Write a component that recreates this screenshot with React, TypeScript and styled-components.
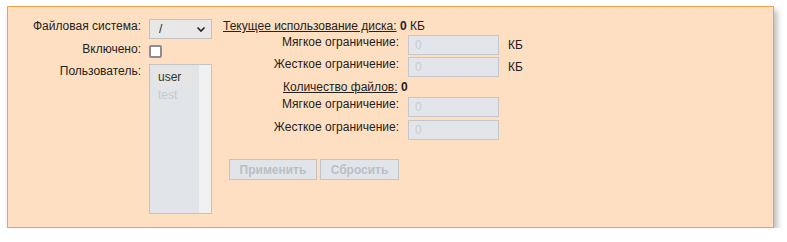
import React from 'react';
import styled, { createGlobalStyle } from 'styled-components';

const GlobalStyle = createGlobalStyle`
  html, body {
    margin: 0;
    padding: 0;
    background: #ffffff;
  }
  body {
    font-family: "Liberation Sans", Arial, sans-serif;
    font-size: 12px;
    color: #222;
  }
`;

const Panel = styled.div`
  box-sizing: border-box;
  margin: 6px 0 0 7px;
  width: 767px;
  height: 222px;
  background: #ffdfc1;
  border: 1px solid #f5a04c;
  box-shadow: 3px 4px 6px rgba(0, 0, 0, 0.28);
  padding: 12px 0 0 0;
  display: flex;
  align-items: flex-start;
  line-height: 14px;
`;

const LeftForm = styled.div`
  display: grid;
  grid-template-columns: 133px 63px;
  column-gap: 8px;
  grid-template-rows: 20px 18px auto;
  row-gap: 3px;
  & > :nth-child(5),
  & > :nth-child(6) {
    margin-top: 1px;
  }
`;

const Label = styled.div`
  text-align: right;
  white-space: nowrap;
  color: #222;
`;

const SelectBox = styled.div`
  box-sizing: border-box;
  height: 20px;
  background: #e8e8e8;
  border: 1px solid #c2c2c2;
  display: flex;
  align-items: center;
  justify-content: space-between;
  padding: 0 5px 0 9px;
  color: #222;
`;

const Checkbox = styled.div`
  box-sizing: border-box;
  width: 13px;
  height: 13px;
  margin-top: 3px;
  border: 2px solid #8c8b99;
  border-radius: 2px;
  background: #ffffff;
`;

const ListBox = styled.div`
  box-sizing: border-box;
  height: 150px;
  background: #e1e5ea;
  border: 1px solid #c4c4c4;
  display: flex;
`;

const Options = styled.div`
  flex: 1;
  padding: 3px 4px;
`;

const Option = styled.div<{ $selected?: boolean }>`
  height: 18px;
  line-height: 18px;
  padding-left: 4px;
  background: ${p => (p.$selected ? '#e5e5e5' : 'transparent')};
  color: ${p => (p.$selected ? '#333' : '#c6c9ce')};
`;

const Track = styled.div`
  width: 12px;
  background: #f0f0f0;
`;

const RightBlock = styled.div`
  margin-left: 11px;
  display: flex;
  flex-direction: column;
`;

const Heading = styled.div<{ $indent?: number; $gap?: number }>`
  padding-left: ${p => p.$indent || 0}px;
  margin-top: ${p => p.$gap || 0}px;
  white-space: nowrap;
  & u {
    text-decoration: underline;
  }
  & b {
    font-weight: bold;
  }
`;

const Row = styled.div<{ $gap: number }>`
  display: grid;
  grid-template-columns: 176px 91px auto;
  column-gap: 9px;
  align-items: start;
  margin-top: ${p => p.$gap}px;
`;

const Input = styled.input`
  box-sizing: border-box;
  width: 91px;
  height: 20px;
  margin: 0;
  background: #e2e5ea;
  border: 1px solid #c4c6c9;
  padding: 0 6px;
  font-family: "Liberation Sans", Arial, sans-serif;
  font-size: 12px;
  color: #c8ccd2;
  &::placeholder {
    color: #c8ccd2;
  }
`;

const Unit = styled.div`
  line-height: 20px;
  color: #222;
`;

const Buttons = styled.div`
  display: flex;
  gap: 3px;
  margin: 19px 0 0 6px;
`;

const Button = styled.button<{ $w: number }>`
  box-sizing: border-box;
  width: ${p => p.$w}px;
  height: 21px;
  background: #e1e5ea;
  border: 1px solid #c4c4c4;
  font-family: "Liberation Sans", Arial, sans-serif;
  font-size: 12px;
  font-weight: bold;
  color: #babec5;
  padding: 0;
`;

const Chevron = () => (
  <svg width="10" height="10" viewBox="0 0 10 10" aria-hidden="true">
    <path d="M1.5 3.5 L5 7 L8.5 3.5" fill="none" stroke="#222" strokeWidth="1.6" />
  </svg>
);

const LimitRow = ({ label, gap, unit }: { label: string; gap: number; unit?: string }) => (
  <Row $gap={gap}>
    <Label>{label}</Label>
    <Input disabled placeholder="0" />
    {unit ? <Unit>{unit}</Unit> : <span />}
  </Row>
);

export default function App() {
  return (
    <>
      <GlobalStyle />
      <Panel>
        <LeftForm>
          <Label>Файловая система:</Label>
          <SelectBox>
            <span>/</span>
            <Chevron />
          </SelectBox>
          <Label>Включено:</Label>
          <Checkbox />
          <Label>Пользователь:</Label>
          <ListBox>
            <Options>
              <Option $selected>user</Option>
              <Option>test</Option>
            </Options>
            <Track />
          </ListBox>
        </LeftForm>
        <RightBlock>
          <Heading>
            <u>Текущее использование диска:</u> <b>0</b> КБ
          </Heading>
          <LimitRow label="Мягкое ограничение:" gap={2} unit="КБ" />
          <LimitRow label="Жесткое ограничение:" gap={2} unit="КБ" />
          <Heading $indent={60} $gap={3}>
            <u>Количество файлов:</u> <b>0</b>
          </Heading>
          <LimitRow label="Мягкое ограничение:" gap={3} />
          <LimitRow label="Жесткое ограничение:" gap={3} />
          <Buttons>
            <Button $w={88} disabled>Применить</Button>
            <Button $w={79} disabled>Сбросить</Button>
          </Buttons>
        </RightBlock>
      </Panel>
    </>
  );
}
